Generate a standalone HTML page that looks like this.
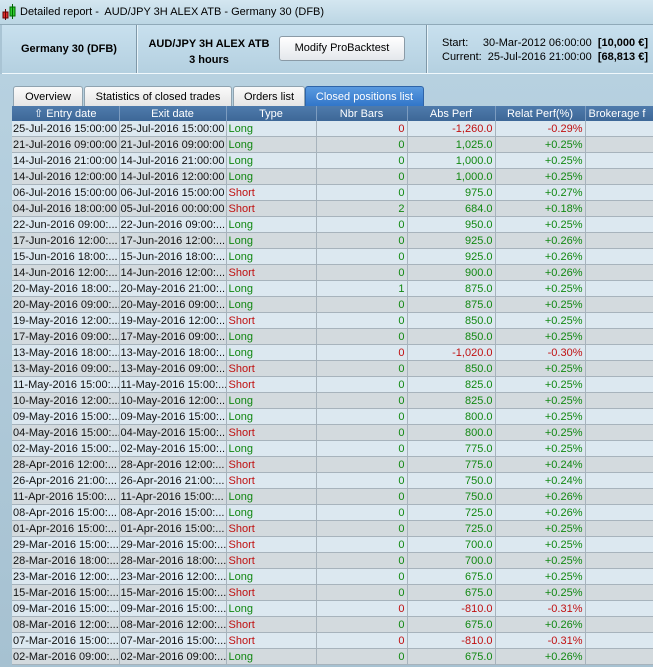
<!DOCTYPE html><html><head><style>
body{margin:0;width:653px;height:667px;overflow:hidden;background:#a9c4d4;font-family:"Liberation Sans",sans-serif;font-size:11px;position:relative}
.title{position:absolute;left:0;top:0;width:653px;height:24px;background:linear-gradient(#d4e6f0,#bcd6e4);border-bottom:1px solid #8fa9b8}
.title span{position:absolute;left:20px;top:6px;font-size:11px;color:#000}
.hdr{position:absolute;left:2px;top:25px;width:651px;height:48px;background:linear-gradient(#c8e0ee,#b4d0e0);border-bottom:1px solid #f0f8fc}
.b{font-weight:bold;position:absolute;text-align:center;white-space:nowrap}
.sep{position:absolute;top:0;width:1px;height:48px;background:#7f98a8;border-right:1px solid #e8f4fa}
.btn{position:absolute;left:279px;top:36px;width:124px;height:23px;border:1px solid #8a9aa6;border-radius:3px;background:linear-gradient(#fff,#e4e8ec);text-align:center;line-height:22px}
.area{position:absolute;left:0;top:74px;width:653px;height:593px;background:linear-gradient(#b7d1e0,#a6c1d1)}
.tab{position:absolute;top:86px;height:20px;border:1px solid #8fa3b0;border-bottom:none;border-radius:3px 3px 0 0;background:linear-gradient(#fafafa,#e4e4e4);text-align:center;line-height:20px;white-space:nowrap}
.tab.on{background:linear-gradient(#5a9ae0,#2f74c8);color:#fff;border-color:#2f64a8}
table{position:absolute;left:12px;top:106px;border-collapse:collapse;table-layout:fixed;width:680px}
th{background:linear-gradient(#4f7bac,#3d6797);color:#fff;font-weight:normal;height:15px;padding:0;border-right:1px solid #7c9cc0;white-space:nowrap;overflow:hidden}
td{height:15px;padding:0 2px;border-right:1px solid #a7b3bc;border-bottom:1px solid #a7b3bc;white-space:nowrap;overflow:hidden;color:#111}
tr:nth-child(odd) td{background:#dce8f0}
tr:nth-child(even) td{background:#d3dade}
.r{text-align:right}.g{color:#118811}.rd{color:#c01010}
td:nth-child(1),td:nth-child(2){padding:0 1px}
</style></head><body>
<div class="title"><svg style="position:absolute;left:2px;top:4px" width="16" height="16"><rect x="1" y="8" width="5" height="6" fill="#e03030" stroke="#600" stroke-width="1"/><rect x="8" y="3" width="5" height="9" fill="#30d030" stroke="#060"/><line x1="10.5" y1="0" x2="10.5" y2="15" stroke="#060"/><line x1="3.5" y1="5" x2="3.5" y2="16" stroke="#600"/></svg><span>Detailed report -&nbsp; AUD/JPY 3H ALEX ATB - Germany 30 (DFB)</span></div>
<div class="hdr">
<div class="b" style="left:0;width:134px;top:18px">Germany 30 (DFB)</div>
<div class="sep" style="left:134px"></div>
<div class="b" style="left:138px;width:138px;top:11px;line-height:16px">AUD/JPY 3H ALEX ATB<br>3 hours</div>
<div class="sep" style="left:424px"></div>
<div style="position:absolute;left:440px;top:11px;line-height:14px">Start:<br>Current:</div>
<div style="position:absolute;left:470px;top:11px;line-height:14px;text-align:right;width:176px;white-space:nowrap">30-Mar-2012 06:00:00&nbsp; <b>[10,000 €]</b><br>25-Jul-2016 21:00:00&nbsp; <b>[68,813 €]</b></div>
</div>
<div class="btn">Modify ProBacktest</div>
<div class="area"></div>
<div class="tab" style="left:13px;width:68px">Overview</div>
<div class="tab" style="left:84px;width:146px">Statistics of closed trades</div>
<div class="tab" style="left:233px;width:70px">Orders list</div>
<div class="tab on" style="left:305px;width:117px">Closed positions list</div>
<table>
<colgroup><col style="width:107px"><col style="width:107px"><col style="width:90px"><col style="width:91px"><col style="width:88px"><col style="width:90px"><col style="width:107px"></colgroup>
<tr><th>⇧ Entry date</th><th>Exit date</th><th>Type</th><th>Nbr Bars</th><th>Abs Perf</th><th>Relat Perf(%)</th><th style="text-align:left">&nbsp;Brokerage f</th></tr>
<tbody id="b">
</tbody></table>
<script>
var d=[["25-Jul-2016 15:00:00","25-Jul-2016 15:00:00","L",0,"-1,260.0","-0.29%"],
["21-Jul-2016 09:00:00","21-Jul-2016 09:00:00","L",0,"1,025.0","+0.25%"],
["14-Jul-2016 21:00:00","14-Jul-2016 21:00:00","L",0,"1,000.0","+0.25%"],
["14-Jul-2016 12:00:00","14-Jul-2016 12:00:00","L",0,"1,000.0","+0.25%"],
["06-Jul-2016 15:00:00","06-Jul-2016 15:00:00","S",0,"975.0","+0.27%"],
["04-Jul-2016 18:00:00","05-Jul-2016 00:00:00","S",2,"684.0","+0.18%"],
["22-Jun-2016 09:00:...","22-Jun-2016 09:00:...","L",0,"950.0","+0.25%"],
["17-Jun-2016 12:00:...","17-Jun-2016 12:00:...","L",0,"925.0","+0.26%"],
["15-Jun-2016 18:00:...","15-Jun-2016 18:00:...","L",0,"925.0","+0.26%"],
["14-Jun-2016 12:00:...","14-Jun-2016 12:00:...","S",0,"900.0","+0.26%"],
["20-May-2016 18:00:...","20-May-2016 21:00:...","L",1,"875.0","+0.25%"],
["20-May-2016 09:00:...","20-May-2016 09:00:...","L",0,"875.0","+0.25%"],
["19-May-2016 12:00:...","19-May-2016 12:00:...","S",0,"850.0","+0.25%"],
["17-May-2016 09:00:...","17-May-2016 09:00:...","L",0,"850.0","+0.25%"],
["13-May-2016 18:00:...","13-May-2016 18:00:...","L",0,"-1,020.0","-0.30%"],
["13-May-2016 09:00:...","13-May-2016 09:00:...","S",0,"850.0","+0.25%"],
["11-May-2016 15:00:...","11-May-2016 15:00:...","S",0,"825.0","+0.25%"],
["10-May-2016 12:00:...","10-May-2016 12:00:...","L",0,"825.0","+0.25%"],
["09-May-2016 15:00:...","09-May-2016 15:00:...","L",0,"800.0","+0.25%"],
["04-May-2016 15:00:...","04-May-2016 15:00:...","S",0,"800.0","+0.25%"],
["02-May-2016 15:00:...","02-May-2016 15:00:...","L",0,"775.0","+0.25%"],
["28-Apr-2016 12:00:...","28-Apr-2016 12:00:...","S",0,"775.0","+0.24%"],
["26-Apr-2016 21:00:...","26-Apr-2016 21:00:...","S",0,"750.0","+0.24%"],
["11-Apr-2016 15:00:...","11-Apr-2016 15:00:...","L",0,"750.0","+0.26%"],
["08-Apr-2016 15:00:...","08-Apr-2016 15:00:...","L",0,"725.0","+0.26%"],
["01-Apr-2016 15:00:...","01-Apr-2016 15:00:...","S",0,"725.0","+0.25%"],
["29-Mar-2016 15:00:...","29-Mar-2016 15:00:...","S",0,"700.0","+0.25%"],
["28-Mar-2016 18:00:...","28-Mar-2016 18:00:...","S",0,"700.0","+0.25%"],
["23-Mar-2016 12:00:...","23-Mar-2016 12:00:...","L",0,"675.0","+0.25%"],
["15-Mar-2016 15:00:...","15-Mar-2016 15:00:...","S",0,"675.0","+0.25%"],
["09-Mar-2016 15:00:...","09-Mar-2016 15:00:...","L",0,"-810.0","-0.31%"],
["08-Mar-2016 12:00:...","08-Mar-2016 12:00:...","S",0,"675.0","+0.26%"],
["07-Mar-2016 15:00:...","07-Mar-2016 15:00:...","S",0,"-810.0","-0.31%"],
["02-Mar-2016 09:00:...","02-Mar-2016 09:00:...","L",0,"675.0","+0.26%"]];
var h="";d.forEach(function(r){var neg=r[4][0]=="-",c=neg?"rd":"g";
h+="<tr><td>"+r[0]+"</td><td>"+r[1]+"</td><td class='"+(r[2]=="L"?"g":"rd")+"'>"+(r[2]=="L"?"Long":"Short")+"</td><td class='r "+(neg?"rd":"g")+"'>"+r[3]+"</td><td class='r "+c+"'>"+r[4]+"</td><td class='r "+c+"'>"+r[5]+"</td><td></td></tr>";});
document.getElementById("b").innerHTML=h;
</script>
</body></html>
